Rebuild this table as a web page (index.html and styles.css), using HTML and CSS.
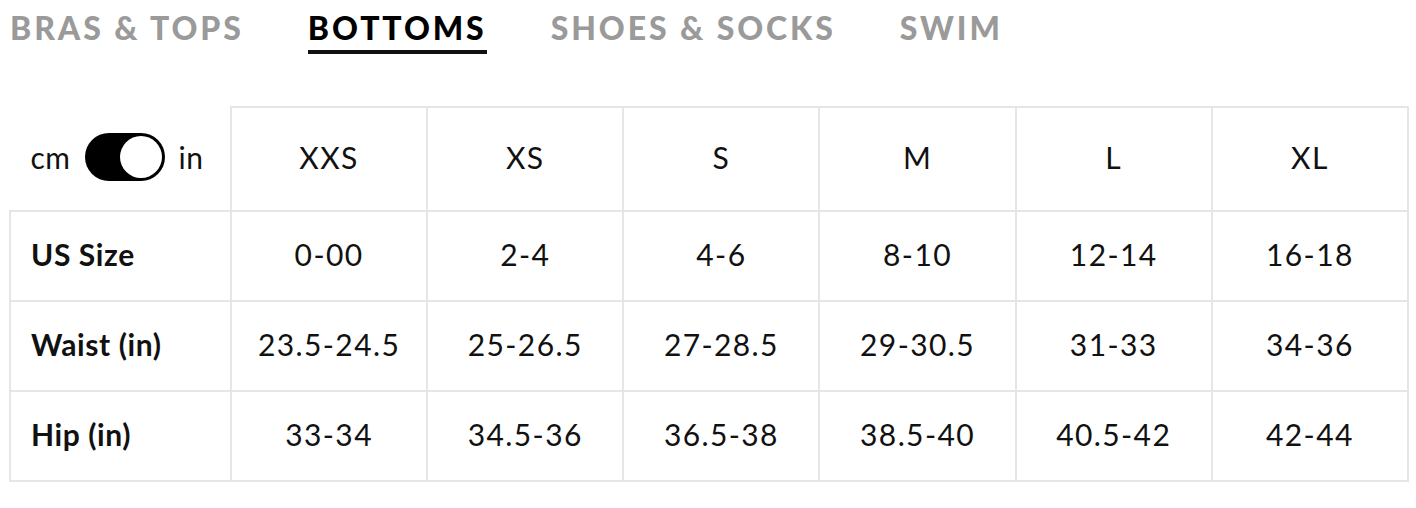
FILE: index.html
```html
<!DOCTYPE html>
<html>
<head>
<meta charset="utf-8">
<link rel="stylesheet" href="styles.css">
</head>
<body>
<nav class="tabs">
  <a class="tab">BRAS &amp; TOPS</a>
  <a class="tab active">BOTTOMS</a>
  <a class="tab">SHOES &amp; SOCKS</a>
  <a class="tab">SWIM</a>
</nav>
<table class="chart">
  <colgroup>
    <col class="c-label"><col><col><col><col><col><col>
  </colgroup>
  <thead>
    <tr>
      <th class="unit">
        <div class="unit-switch">
          <span>cm</span>
          <span class="toggle"><span class="knob"></span></span>
          <span>in</span>
        </div>
      </th>
      <th>XXS</th><th>XS</th><th>S</th><th>M</th><th>L</th><th>XL</th>
    </tr>
  </thead>
  <tbody>
    <tr><td class="label">US Size</td><td>0-00</td><td>2-4</td><td>4-6</td><td>8-10</td><td>12-14</td><td>16-18</td></tr>
    <tr><td class="label">Waist (in)</td><td>23.5-24.5</td><td>25-26.5</td><td>27-28.5</td><td>29-30.5</td><td>31-33</td><td>34-36</td></tr>
    <tr><td class="label">Hip (in)</td><td>33-34</td><td>34.5-36</td><td>36.5-38</td><td>38.5-40</td><td>40.5-42</td><td>42-44</td></tr>
  </tbody>
</table>
</body>
</html>
```
FILE: styles.css
```css
html, body {
  margin: 0;
  background: #fff;
}
body {
  padding: 0 0 0 9px;
  font-family: "Lato", "Liberation Sans", sans-serif;
  color: #111;
}
.tabs {
  display: flex;
  gap: 64px;
  padding: 9px 0 0 1px;
  height: 45px;
}
.tab {
  font-family: "Lato", sans-serif;
  font-weight: 900;
  font-size: 32px;
  letter-spacing: 2.9px;
  color: #9a9a9a;
  line-height: 38px;
  height: 45px;
  box-sizing: border-box;
}
.tab.active {
  color: #000;
  border-bottom: 4px solid #111;
}
.chart {
  margin-top: 52px;
  width: 1400px;
  border-collapse: collapse;
  table-layout: fixed;
}
.c-label { width: 221px; }
.chart th, .chart td {
  border: 2px solid #e6e6e6;
  text-align: center;
  font-size: 30px;
  font-weight: 400;
  letter-spacing: 1.4px;
  color: #111;
  padding: 0 0 4px;
}
.chart thead tr { height: 104px; }
.chart tbody tr { height: 90px; }
.chart th.unit {
  border-top: none;
  border-left: none;
}
.chart td.label {
  text-align: left;
  font-weight: 700;
  letter-spacing: 0.6px;
  padding-left: 20px;
}
.unit-switch {
  display: flex;
  align-items: center;
  justify-content: center;
  gap: 14px;
  font-size: 30px;
  letter-spacing: 0.5px;
  padding: 0 8px 0 2px;
}
.toggle {
  width: 80px;
  height: 48px;
  border-radius: 24px;
  background: #000;
  position: relative;
  display: inline-block;
}
.knob {
  position: absolute;
  right: 3px;
  top: 3px;
  width: 42px;
  height: 42px;
  border-radius: 50%;
  background: #fff;
}
```
